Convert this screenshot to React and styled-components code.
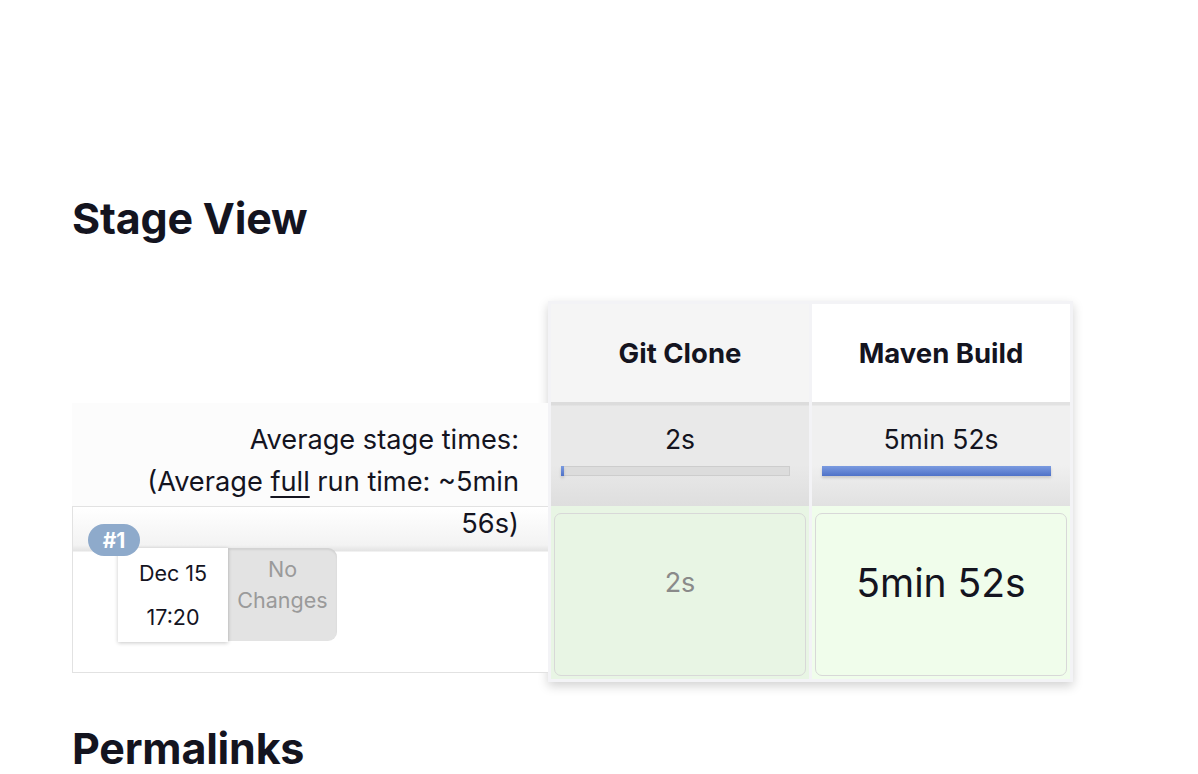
import React from "react";
import styled, { createGlobalStyle } from "styled-components";

const GlobalStyle = createGlobalStyle`
  body {
    margin: 0;
    background: #ffffff;
    font-family: Inter, "Noto Sans", sans-serif;
    color: #14141f;
  }
`;

const Page = styled.div`
  padding: 0 72px;
`;

const Heading = styled.h2`
  margin: ${(props) => props.top}px 0 0;
  font-size: 43px;
  line-height: 53px;
  font-weight: 700;
  letter-spacing: -0.2px;
`;

const Table = styled.div`
  display: flex;
  align-items: flex-start;
  margin-top: 56px;
`;

const LeftCol = styled.div`
  width: 476px;
  display: flex;
  flex-direction: column;
`;

const HeadSpacer = styled.div`
  height: 102px;
`;

const AvgLabel = styled.div`
  height: 103px;
  box-sizing: border-box;
  padding: 16px 29px 0 0;
  background: #fcfcfc;
  text-align: right;
  font-size: 27.2px;
  line-height: 42px;
  position: relative;
  z-index: 1;

  u {
    text-underline-offset: 5px;
    text-decoration-thickness: 2px;
  }
`;

const BuildRow = styled.div`
  height: 167px;
  box-sizing: border-box;
  border: 1px solid #e2e2e2;
  border-right: none;
  position: relative;
  background: linear-gradient(#ffffff 0, #f3f3f3 38px, #e3e3e3 44px, #ffffff 45px);
  padding: 41px 0 0 45px;
  display: flex;
  align-items: flex-start;
`;

const Badge = styled.div`
  position: absolute;
  left: 15px;
  top: 17px;
  width: 52px;
  height: 32px;
  border-radius: 16px;
  background: #8eaacb;
  color: #fff;
  font-size: 21px;
  font-weight: 700;
  display: flex;
  align-items: center;
  justify-content: center;
  z-index: 2;
`;

const DateBox = styled.div`
  width: 110px;
  height: 94px;
  background: #fff;
  box-shadow: 0 1px 4px rgba(0, 0, 0, 0.22);
  display: flex;
  flex-direction: column;
  align-items: center;
  justify-content: center;
  font-size: 21.5px;
  line-height: 44px;
  position: relative;
  z-index: 1;
`;

const ChangesBox = styled.div`
  width: 109px;
  height: 93px;
  background: #e3e3e3;
  border-radius: 0 9px 9px 0;
  box-shadow: inset 0 2px 2px rgba(0, 0, 0, 0.08);
  color: #9a9a9a;
  font-size: 21.5px;
  line-height: 31px;
  text-align: center;
  padding-top: 6px;
  box-sizing: border-box;
`;

const Panel = styled.div`
  width: 525px;
  box-sizing: border-box;
  padding: 3px;
  background: #f3f3f6;
  box-shadow: 0 4px 10px rgba(0, 0, 0, 0.18);
  display: grid;
  grid-template-columns: 1fr 1fr;
  grid-template-rows: 98px 104px 173px;
  column-gap: 3px;
`;

const StageHead = styled.div`
  background: ${(props) => (props.dim ? "#f5f5f5" : "#ffffff")};
  display: flex;
  align-items: center;
  justify-content: center;
  font-size: 27.5px;
  font-weight: 700;
`;

const AvgCell = styled.div`
  background: ${(props) =>
    props.dim
      ? "linear-gradient(#dcdcdc 0, #dcdcdc 3px, #e9e9e9 4px, #e9e9e9 60%, #dedede 100%)"
      : "linear-gradient(#e2e2e2 0, #e2e2e2 3px, #f0f0f0 4px, #f0f0f0 60%, #e1e1e1 100%)"};
  display: flex;
  flex-direction: column;
  align-items: center;
  padding-top: 21px;
  box-sizing: border-box;
  font-size: 26.5px;
  line-height: 32px;
`;

const Track = styled.div`
  width: 229px;
  height: 10px;
  margin: 11px 9px 0 0;
  background: #dcdcdc;
  box-shadow: inset 0 0 0 1px #cdcdcd;
  display: flex;
`;

const Fill = styled.div`
  height: 100%;
  background: linear-gradient(#7b9be0, #4f72c8);
  box-shadow: 0 2px 3px rgba(0, 0, 0, 0.15);
`;

const BuildCell = styled.div`
  background: ${(props) => (props.dim ? "#e8f5e4" : "#f0fdeb")};
  padding: 7px 3px 3px;
  display: flex;
`;

const StageBox = styled.div`
  flex: 1;
  border: 1px solid #d8d8d8;
  border-radius: 7px;
  display: flex;
  align-items: center;
  justify-content: center;
  padding-bottom: 24px;
  font-size: ${(props) => (props.big ? "39px" : "27px")};
  color: ${(props) => (props.big ? "#14141f" : "#8a8a8a")};
`;

const stages = [
  { name: "Git Clone", avg: "2s", pct: 1.3, time: "2s", dim: true },
  { name: "Maven Build", avg: "5min 52s", pct: 100, time: "5min 52s", dim: false },
];

export default function App() {
  return (
    <Page>
      <GlobalStyle />
      <Heading top={192}>Stage View</Heading>
      <Table>
        <LeftCol>
          <HeadSpacer />
          <AvgLabel>
            Average stage times:
            <br />
            (Average <u>full</u> run time: ~5min
            <br />
            56s)
          </AvgLabel>
          <BuildRow>
            <Badge>#1</Badge>
            <DateBox>
              <span>Dec 15</span>
              <span>17:20</span>
            </DateBox>
            <ChangesBox>
              No
              <br />
              Changes
            </ChangesBox>
          </BuildRow>
        </LeftCol>
        <Panel>
          {stages.map((s) => (
            <StageHead key={s.name} dim={s.dim}>
              {s.name}
            </StageHead>
          ))}
          {stages.map((s) => (
            <AvgCell key={s.name} dim={s.dim}>
              {s.avg}
              <Track>
                <Fill style={{ width: `${s.pct}%` }} />
              </Track>
            </AvgCell>
          ))}
          {stages.map((s) => (
            <BuildCell key={s.name} dim={s.dim}>
              <StageBox big={!s.dim}>{s.time}</StageBox>
            </BuildCell>
          ))}
        </Panel>
      </Table>
      <Heading top={40}>Permalinks</Heading>
    </Page>
  );
}
